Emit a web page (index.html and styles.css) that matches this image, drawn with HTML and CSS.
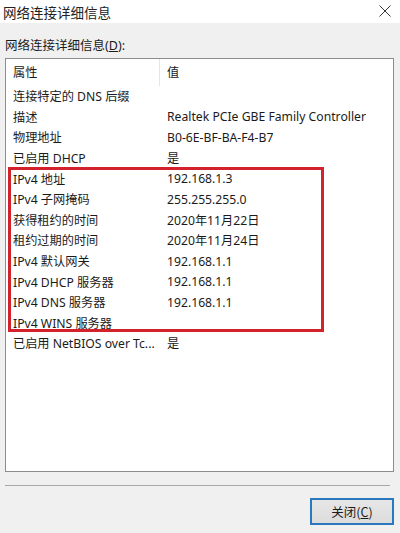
FILE: index.html
```html
<!DOCTYPE html>
<html lang="zh-CN">
<head>
  <meta charset="UTF-8">
  <meta name="viewport" content="width=device-width, initial-scale=1.0">
  <title>网络连接详细信息</title>
  <link rel="stylesheet" href="styles.css">
</head>
<body>

<div class="window">
  <div class="titlebar">
    <span class="title">网络连接详细信息</span>
    <svg class="close" width="12" height="12" viewBox="0 0 12 12">
      <path d="M0.5 0.5 L11.5 11.5 M11.5 0.5 L0.5 11.5" stroke="#333" stroke-width="1" fill="none"/>
    </svg>
  </div>

  <div class="body">
    <div class="label">网络连接详细信息(<u>D</u>):</div>

    <div class="list">
      <div class="row header">
        <div class="cell name">属性</div>
        <div class="cell value">值</div>
      </div>
      <div class="row"><div class="cell name">连接特定的 DNS 后缀</div><div class="cell value"></div></div>
      <div class="row"><div class="cell name">描述</div><div class="cell value">Realtek PCIe GBE Family Controller</div></div>
      <div class="row"><div class="cell name">物理地址</div><div class="cell value">B0-6E-BF-BA-F4-B7</div></div>
      <div class="row"><div class="cell name">已启用 DHCP</div><div class="cell value">是</div></div>
      <div class="row"><div class="cell name">IPv4 地址</div><div class="cell value">192.168.1.3</div></div>
      <div class="row"><div class="cell name">IPv4 子网掩码</div><div class="cell value">255.255.255.0</div></div>
      <div class="row"><div class="cell name">获得租约的时间</div><div class="cell value">2020年11月22日</div></div>
      <div class="row"><div class="cell name">租约过期的时间</div><div class="cell value">2020年11月24日</div></div>
      <div class="row"><div class="cell name">IPv4 默认网关</div><div class="cell value">192.168.1.1</div></div>
      <div class="row"><div class="cell name">IPv4 DHCP 服务器</div><div class="cell value">192.168.1.1</div></div>
      <div class="row"><div class="cell name">IPv4 DNS 服务器</div><div class="cell value">192.168.1.1</div></div>
      <div class="row"><div class="cell name">IPv4 WINS 服务器</div><div class="cell value"></div></div>
      <div class="row"><div class="cell name">已启用 NetBIOS over Tc...</div><div class="cell value">是</div></div>

      <!-- red highlight drawn over the IPv4 rows -->
      <div class="highlight"></div>
    </div>

    <div class="separator"></div>

    <div class="footer">
      <button class="btn">关闭(<u>C</u>)</button>
    </div>
  </div>
</div>

</body>
</html>
```

FILE: styles.css
```css
body {
  margin: 0;
  font-family: "Noto Sans", "Noto Sans CJK SC", sans-serif;
  font-size: 12.2px;
  color: #1b1b1b;
  background-color: #f0f0f0;
}
.window {
  width: 400px;
  height: 533px;
  overflow: hidden;
}
.titlebar {
  height: 23px;
  background-color: #fff;
  display: flex;
  align-items: center;
  justify-content: space-between;
  padding: 0 9px 0 3px;
}
.title {
  font-size: 13.5px;
  color: #222;
}
.close {
  margin-top: -2px;
}
.body {
  padding: 14px 6px 0 5px;
}
.label {
  font-size: 12.5px;
  line-height: 18px;
  height: 21px;
}
.list {
  position: relative;
  height: 412px;
  border: 1px solid #8c8c8c;
  background-color: #fff;
}
.row {
  display: flex;
  height: 20.6px;
  align-items: center;
}
.row.header {
  height: 27px;
}
.cell {
  white-space: nowrap;
  overflow: hidden;
}
.cell.name {
  width: 147px;
  padding-left: 7px;
}
.cell.value {
  padding-left: 7px;
}
.header .cell {
  height: 27px;
  line-height: 27px;
  margin-top: -1px;
}
.header .cell.name {
  border-right: 1px solid #e5e5e5;
  width: 146px;
}
.highlight {
  position: absolute;
  left: 2px;
  top: 108px;
  width: 310px;
  height: 159px;
  border: 3px solid #d3222c;
}
.separator {
  height: 1px;
  margin: 13px 4px 0 0;
  background-color: #a8a8a8;
}
.footer {
  display: flex;
  justify-content: flex-end;
  padding-top: 12px;
}
.btn {
  width: 84px;
  height: 27px;
  border: 2px solid #2a78c0;
  background: linear-gradient(#e6e6e6, #dcdcdc);
  font-family: "Noto Sans CJK SC", sans-serif;
  font-size: 12.5px;
  color: #1b1b1b;
  padding: 0;
}
```
